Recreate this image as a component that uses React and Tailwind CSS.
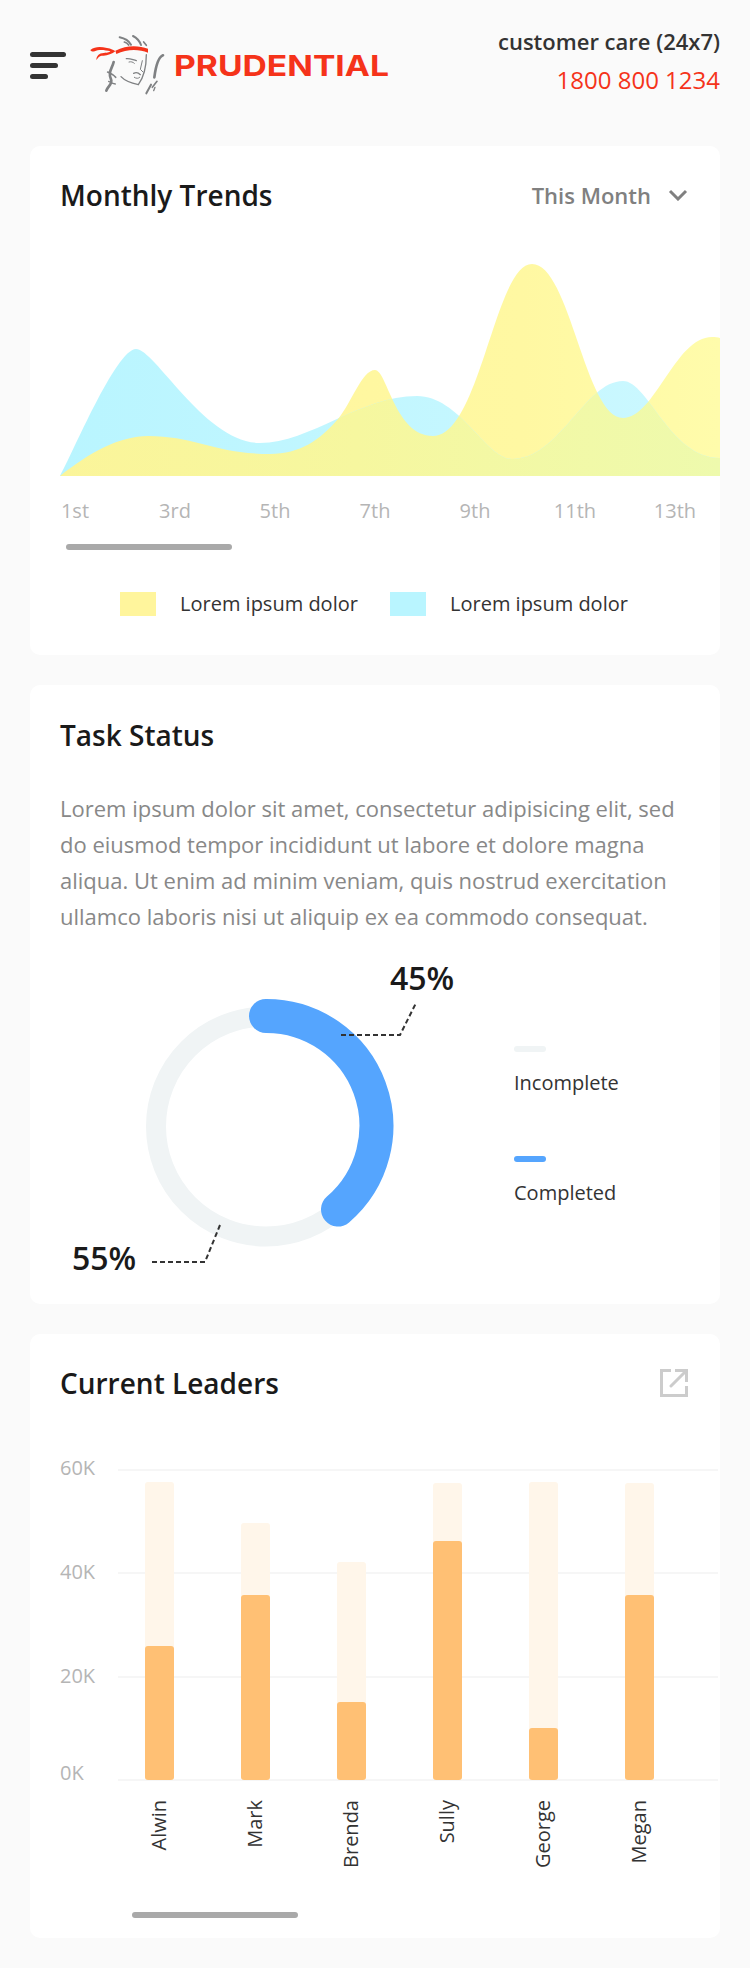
import React from "react";

const days = ["1st", "3rd", "5th", "7th", "9th", "11th", "13th"];
const yTicks = [
  { label: "60K", cls: "top-[-15px]" },
  { label: "40K", cls: "top-[89px]" },
  { label: "20K", cls: "top-[193px]" },
  { label: "0K", cls: "top-[290px]" },
];
const leaders = [
  { name: "Alwin", track: "h-[298px]", fill: "h-[134px]" },
  { name: "Mark", track: "h-[257px]", fill: "h-[185px]" },
  { name: "Brenda", track: "h-[218px]", fill: "h-[78px]" },
  { name: "Sully", track: "h-[297px]", fill: "h-[239px]" },
  { name: "George", track: "h-[298px]", fill: "h-[52px]" },
  { name: "Megan", track: "h-[297px]", fill: "h-[185px]" },
];

const BLUE_PATH =
  "M60 476C72 455 116 349 136 349C155 349 205 443 260 443C310 443 360 396 417 396C460 396 486 459 512 459C560 459 585 381 623 381C648 381 670 458 720 458L720 476Z";
const YELLOW_PATH =
  "M60 476C90 452 120 436 148 436C195 436 215 454 270 454C300 454 320 440 338 419C352 402 362 370 375 370C387 370 395 436 433 436C480 436 495 264 532 264C570 264 585 418 623 418C655 418 675 337 712 337C715 337 718 337 720 338L720 476Z";

const Logo = () => (
  <svg width="80" height="64" viewBox="260 95 240 192" fill="none">
    <path d="M345 148C380 130 415 132 443 142L443 154C415 143 380 143 348 158Z" fill="#f5331a" />
    <path
      d="M270 146C285 135 300 136 320 140C332 142 340 146 345 150C335 158 318 165 305 163C298 162 292 170 288 176C288 165 296 155 310 155C322 155 330 152 330 150C315 146 295 143 283 150C278 152 272 150 270 146Z"
      fill="#f5331a"
    />
    <g stroke="#7f8183" strokeLinecap="round">
      <path d="M358 108C372 111 385 118 392 130" strokeWidth="6" />
      <path d="M372 122C378 124 382 127 385 131" strokeWidth="5" />
      <path d="M398 104C410 110 418 120 422 131" strokeWidth="6" />
      <path d="M430 122L438 132" strokeWidth="5" />
      <path d="M438 160C438 195 432 225 414 250C395 246 375 240 362 226" strokeWidth="4" />
      <path d="M378 172C388 170 398 176 408 178" strokeWidth="4" />
      <path d="M386 182C392 180 398 182 402 186" strokeWidth="3" />
      <path d="M426 178L420 204L428 212" strokeWidth="3" />
      <path d="M400 216C408 212 416 216 420 220" strokeWidth="4" />
      <path d="M402 228C408 232 414 232 418 228" strokeWidth="3" />
      <path d="M340 182C336 200 322 212 332 234C338 248 322 254 318 268" strokeWidth="8" />
      <path d="M322 212C330 216 340 220 346 228" strokeWidth="5" />
      <path d="M325 240C332 244 338 248 345 248" strokeWidth="4" />
      <path d="M488 162C472 168 466 198 462 228" strokeWidth="8" />
      <path d="M470 240L456 258" strokeWidth="5" />
      <path d="M452 250L438 276" strokeWidth="6" />
      <path d="M464 258L460 268" strokeWidth="4" />
    </g>
  </svg>
);

const Card = ({ children, className = "" }) => (
  <div className={`bg-white rounded-[10px] mx-[30px] ${className}`}>{children}</div>
);

const CardHeader = ({ title, children, className = "h-[100px]" }) => (
  <div className={`${className} px-[30px] flex items-center justify-between`}>
    <h2 className="text-[28px] font-semibold text-[#1a1a1a]">{title}</h2>
    {children}
  </div>
);

export default function App() {
  return (
    <div className="w-[750px] h-[1968px] bg-[#fafafa] font-['Open_Sans',sans-serif] overflow-hidden">
      <header className="h-[146px] px-[30px] flex justify-between items-start">
        <div className="h-[130px] flex items-center">
          <div className="w-[36px] flex flex-col gap-[6px]">
            <div className="h-[5px] w-[36px] rounded-full bg-[#333333]" />
            <div className="h-[5px] w-[28px] rounded-full bg-[#333333]" />
            <div className="h-[5px] w-[18px] rounded-full bg-[#333333]" />
          </div>
          <div className="ml-[21px]">
            <Logo />
          </div>
          <span className="ml-[7px] inline-block origin-left scale-x-[1.16] font-['Inter',sans-serif] font-bold text-[29px] leading-none text-[#f5331a]">
            PRUDENTIAL
          </span>
        </div>
        <div className="pt-[22px] text-right leading-[38px]">
          <div className="text-[22px] font-semibold text-[#333333]">customer care (24x7)</div>
          <div className="mt-[1px] text-[24px] font-normal text-[#f5331a]">1800 800 1234</div>
        </div>
      </header>

      <Card className="pb-[39px]">
        <CardHeader title="Monthly Trends" className="h-[100px] pb-[2px]">
          <div className="flex items-center gap-[17px] pr-[2px] text-[22px] font-semibold text-[#808080]">
            This Month
            <svg width="20" height="12" viewBox="0 0 20 12" fill="none" stroke="#808080" strokeWidth="3">
              <path d="M2 2L10 10L18 2" />
            </svg>
          </div>
        </CardHeader>
        <svg className="block ml-[30px] mt-[4px]" width="660" height="226" viewBox="60 250 660 226">
          <defs>
            <linearGradient id="yellow" x1="0" x2="1" y1="0" y2="0">
              <stop offset="0" stopColor="#fff59c" />
              <stop offset="0.7" stopColor="#fff8a2" />
              <stop offset="1" stopColor="#fffcab" />
            </linearGradient>
            <linearGradient id="blue" x1="0" x2="1" y1="0" y2="0">
              <stop offset="0" stopColor="#b9f5ff" />
              <stop offset="1" stopColor="#ccf8ff" />
            </linearGradient>
            <linearGradient id="overlap" gradientUnits="userSpaceOnUse" x1="60" x2="720" y1="0" y2="0">
              <stop offset="0" stopColor="#fbf59a" />
              <stop offset="0.45" stopColor="#f6f79f" />
              <stop offset="1" stopColor="#eefaad" />
            </linearGradient>
            <clipPath id="yellowClip">
              <path d={YELLOW_PATH} />
            </clipPath>
          </defs>
          <path d={YELLOW_PATH} fill="url(#yellow)" />
          <path d={BLUE_PATH} fill="url(#blue)" />
          <path d={BLUE_PATH} fill="url(#overlap)" clipPath="url(#yellowClip)" />
        </svg>
        <div className="mt-[21px] ml-[-5px] flex text-[20px] leading-[28px] text-[#b5b5b5]">
          {days.map((d) => (
            <div key={d} className="w-[100px] shrink-0 text-center">
              {d}
            </div>
          ))}
        </div>
        <div className="mt-[19px] ml-[36px] w-[166px] h-[6px] rounded-full bg-[#a9a9a9]" />
        <div className="mt-[42px] ml-[90px] flex items-center text-[20px] leading-[24px] text-[#333333]">
          <div className="w-[36px] h-[24px] bg-[#fff59c]" />
          <span className="ml-[24px] w-[210px]">Lorem ipsum dolor</span>
          <div className="w-[36px] h-[24px] bg-[#b9f5ff]" />
          <span className="ml-[24px]">Lorem ipsum dolor</span>
        </div>
      </Card>

      <Card className="mt-[30px]">
        <CardHeader title="Task Status" />
        <p className="mt-[5px] px-[30px] text-[22px] leading-[36px] text-[#888888] whitespace-nowrap">
          Lorem ipsum dolor sit amet, consectetur adipisicing elit, sed
          <br />
          do eiusmod tempor incididunt ut labore et dolore magna
          <br />
          aliqua. Ut enim ad minim veniam, quis nostrud exercitation
          <br />
          ullamco laboris nisi ut aliquip ex ea commodo consequat.
        </p>
        <div className="h-[370px] flex">
          <div className="relative w-[484px] h-[370px]">
            <svg className="block" width="484" height="370" viewBox="30 934 484 370" fill="none">
              <circle cx="266" cy="1126.5" r="110" stroke="#f0f4f5" strokeWidth="20" />
              <path d="M266 1016A110 110 0 0 1 338 1209.5" stroke="#55a5fe" strokeWidth="34" strokeLinecap="round" />
              <path d="M341 1035L400 1035L416 1003" stroke="#333333" strokeWidth="2" strokeDasharray="5 3" />
              <path d="M152 1262L205 1262L220 1225" stroke="#333333" strokeWidth="2" strokeDasharray="5 3" />
            </svg>
            <span className="absolute left-[360px] top-[22px] text-[32px] leading-[44px] font-semibold text-[#1a1a1a]">45%</span>
            <span className="absolute left-[42px] top-[302px] text-[32px] leading-[44px] font-semibold text-[#1a1a1a]">55%</span>
          </div>
          <div className="pt-[112px] text-[20px] leading-[28px] text-[#333333]">
            <div className="w-[32px] h-[6px] rounded-full bg-[#f0f4f5]" />
            <div className="mt-[17px]">Incomplete</div>
            <div className="mt-[59px] w-[32px] h-[6px] rounded-full bg-[#55a5fe]" />
            <div className="mt-[17px]">Completed</div>
          </div>
        </div>
      </Card>

      <Card className="mt-[30px] h-[604px]">
        <CardHeader title="Current Leaders" className="h-[98px]">
          <svg className="mr-[2px]" width="28" height="28" viewBox="0 0 28 28" fill="none" stroke="#cccccc" strokeWidth="3">
            <path d="M11 1.5H1.5V26.5H26.5V17" />
            <path d="M15 1.5H26.5V13" />
            <path d="M26 2L11 17" strokeLinecap="round" />
          </svg>
        </CardHeader>
        <div className="relative mt-[37px] ml-[30px] h-[312px]">
          {yTicks.map((t) => (
            <div key={t.label} className={`absolute left-0 ${t.cls} text-[20px] leading-[28px] text-[#b5b5b5]`}>
              {t.label}
            </div>
          ))}
          <div className="ml-[58px] mr-[2px] h-[312px] flex flex-col justify-between">
            {[0, 1, 2, 3].map((i) => (
              <div key={i} className="h-[2px] bg-[#f6f6f6]" />
            ))}
          </div>
          <div className="absolute left-[51.5px] top-[12px] h-[299px] flex items-end">
            {leaders.map((p) => (
              <div key={p.name} className="w-[96px] flex justify-center">
                <div className={`w-[29px] ${p.track} rounded-[3px] bg-[#fff6ea] flex items-end`}>
                  <div className={`w-[29px] ${p.fill} rounded-[3px] bg-[#ffc074]`} />
                </div>
              </div>
            ))}
          </div>
        </div>
        <div className="mt-[19px] ml-[81px] h-[112px] flex items-start text-[20px] leading-[28px] text-[#333333]">
          {leaders.map((p) => (
            <div key={p.name} className="w-[96px] flex justify-center">
              <span className="[writing-mode:vertical-rl] rotate-180">{p.name}</span>
            </div>
          ))}
        </div>
        <div className="ml-[102px] w-[166px] h-[6px] rounded-full bg-[#a9a9a9]" />
      </Card>
    </div>
  );
}
